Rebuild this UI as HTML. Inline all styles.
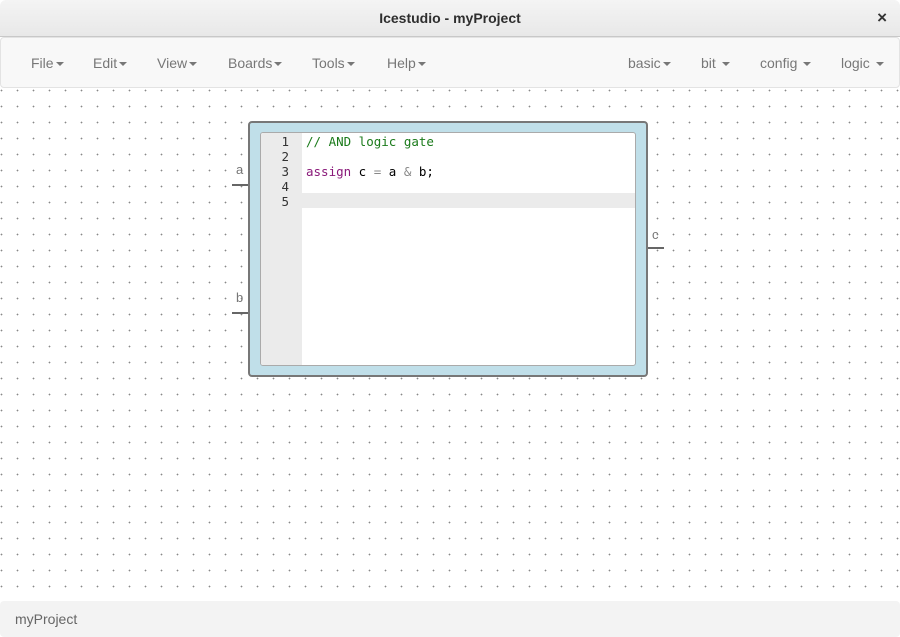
<!DOCTYPE html>
<html><head><style>
*{margin:0;padding:0;box-sizing:border-box}
body{width:900px;height:637px;overflow:hidden;background:#fff;font-family:"Liberation Sans",sans-serif;position:relative}
#title{position:absolute;left:0;top:0;width:900px;height:37px;background:linear-gradient(#f4f4f4,#e8e8e8);border-bottom:1px solid #c8c8c8;border-radius:6px 6px 0 0;text-align:center;line-height:36px;font-weight:bold;font-size:14px;color:#2e2e2e}
#close{position:absolute;right:13px;top:0;font-size:17px;color:#333;font-weight:bold}
#grid{position:absolute;left:0;top:88px;width:900px;height:513px;background-image:radial-gradient(circle at 1.5px 2.5px,#888 0.7px,transparent 1px);background-size:16px 16px;background-position:0 0}
#menu{position:absolute;left:0;top:37px;width:900px;height:51px;background:#f8f8f8;border:1px solid #e3e3e3;border-radius:4px}
.m{position:absolute;top:17px;font-size:14px;color:#777}
.c{display:inline-block;width:0;height:0;border-left:4px solid transparent;border-right:4px solid transparent;border-top:4px solid #777;vertical-align:middle;margin-left:2px}
#foot{position:absolute;left:0;top:601px;width:900px;height:36px;background:#f3f3f3;border-radius:4px;font-size:14px;color:#666;padding:10px 15px}
#blk{position:absolute;left:248px;top:121px;width:400px;height:256px;background:#c0dfe9;border:2px solid #777;border-radius:4px}
#ed{position:absolute;left:10px;top:9px;width:376px;height:234px;background:#fff;border:1px solid #aaa;border-radius:3px;overflow:hidden}
#gut{position:absolute;left:0;top:0;width:41px;height:100%;background:#ebebeb}
.ln{position:absolute;left:0;width:376px;height:15px;font-family:"DejaVu Sans Mono",monospace;font-size:12.5px;line-height:15px}
.ln .n{position:absolute;left:0;width:28px;text-align:right;color:#333;top:1px}
.ln .t{position:absolute;left:45px;color:#000;white-space:pre;top:1px}
.lbl{position:absolute;font-size:13px;color:#777}
.pl{position:absolute;height:2px;background:#666}
</style></head><body>
<div id="title">Icestudio - myProject<span id="close">×</span></div>
<div id="grid"></div>
<div id="menu">
<span class="m" style="left:30px;top:17px">File<span class="c"></span></span>
<span class="m" style="left:92px">Edit<span class="c"></span></span>
<span class="m" style="left:156px">View<span class="c"></span></span>
<span class="m" style="left:227px">Boards<span class="c"></span></span>
<span class="m" style="left:311px">Tools<span class="c"></span></span>
<span class="m" style="left:386px">Help<span class="c"></span></span>
<span class="m" style="left:627px">basic<span class="c"></span></span>
<span class="m" style="left:700px">bit <span class="c"></span></span>
<span class="m" style="left:759px">config <span class="c"></span></span>
<span class="m" style="left:840px">logic <span class="c"></span></span>
</div>
<span class="lbl" style="left:236px;top:162px">a</span><div class="pl" style="left:232px;top:184px;width:17px"></div>
<span class="lbl" style="left:236px;top:290px">b</span><div class="pl" style="left:232px;top:312px;width:17px"></div>
<span class="lbl" style="left:652px;top:227px">c</span><div class="pl" style="left:647px;top:247px;width:17px"></div>
<div id="blk"><div id="ed"><div id="gut"></div>
<div class="ln" style="top:60px;background:#ebebeb"></div>
<div class="ln" style="top:0px"><span class="n">1</span><span class="t" style="color:#1a7a1a">// AND logic gate</span></div>
<div class="ln" style="top:15px"><span class="n">2</span></div>
<div class="ln" style="top:30px"><span class="n">3</span><span class="t"><span style="color:#8a1a7a">assign</span> c <span style="color:#888">=</span> a <span style="color:#888">&amp;</span> b;</span></div>
<div class="ln" style="top:45px"><span class="n">4</span></div>
<div class="ln" style="top:60px"><span class="n">5</span></div>
</div></div>
<div id="foot">myProject</div>
</body></html>
